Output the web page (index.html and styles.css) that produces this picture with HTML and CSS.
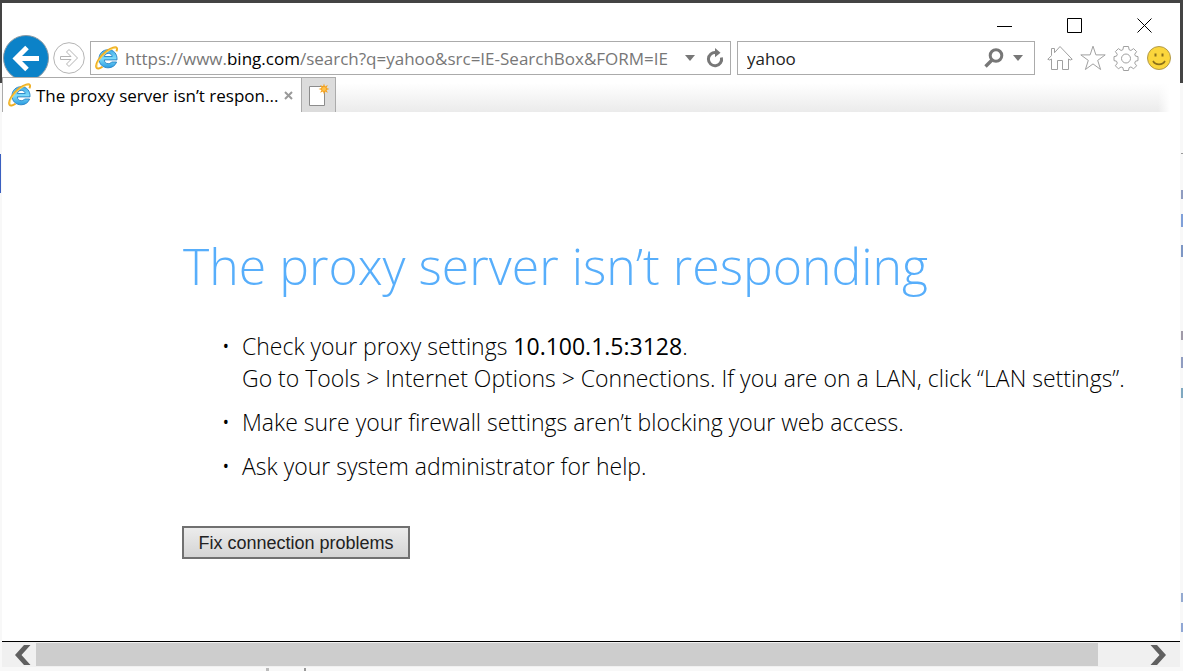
FILE: index.html
```html
<!DOCTYPE html>
<html lang="en">
<head>
  <meta charset="UTF-8" />
  <meta name="viewport" content="width=device-width, initial-scale=1.0"/>
  <title>The proxy server isn’t responding</title>
  <link rel="stylesheet" href="styles.css">
</head>
<body>
  <svg class="defs" aria-hidden="true">
    <defs>
      <linearGradient id="blue" x1="0" y1="0" x2="0" y2="1">
        <stop offset="0" stop-color="#3fa9e6"/>
        <stop offset=".5" stop-color="#7fdcfa"/>
        <stop offset="1" stop-color="#2a9be0"/>
      </linearGradient>
      <symbol id="ie" viewBox="0 0 24 24">
        <path d="M22 13.900H9.300c.2 2.400 1.700 3.800 3.900 3.800 1.500 0 2.700-.6 3.400-1.700h5c-1.300 3.700-4.500 5.800-8.500 5.800-5.300 0-9.100-3.700-9.100-9 0-5.400 3.900-9.100 9.200-9.100 5.500 0 9.200 4.100 8.800 10.200zM9.400 10.500h7.800c-.3-1.900-1.700-3.100-3.800-3.100-2.200 0-3.600 1.200-4 3.100z" fill="url(#blue)" fill-rule="evenodd" stroke="#2581c4" stroke-width=".9"/>
        <path d="M7.500 20.700C4.600 22.700 2.400 23 1.500 21.600-.2 18.700 4.300 10.700 11 5.600 16.300 1.600 20.900.3 21.800 2.100c.5.900.2 2-.4 3.300" fill="none" stroke="#efae22" stroke-width="2"/>
        <path d="M2.200 21.300C.9 18.400 5.300 11.100 11.400 6.400 16 2.900 20.200 1.300 21.300 2.500" fill="none" stroke="#ffdf6b" stroke-width=".9"/>
      </symbol>
    </defs>
  </svg>

  <div class="window">
    <div class="titlebar">
      <button class="caption" aria-label="Minimize">
        <svg width="16" height="16" viewBox="0 0 16 16"><path d="M0 8.500h15"/></svg>
      </button>
      <button class="caption" aria-label="Maximize">
        <svg width="16" height="16" viewBox="0 0 16 16"><path d="M.5.5h14v14H.5z"/></svg>
      </button>
      <button class="caption" aria-label="Close">
        <svg width="16" height="16" viewBox="0 0 16 16"><path d="M.5.5l14 14M14.500.5l-14 14"/></svg>
      </button>
    </div>

    <div class="navbar">
      <button class="back" aria-label="Back">
        <svg width="46" height="46" viewBox="0 0 46 46">
          <circle cx="23" cy="23" r="22.500" fill="#0b82c8" stroke="#8d9aa3"/>
          <path d="M24 12.500L13 23.500l11 11M13.500 23.500H36" fill="none" stroke="#fff" stroke-width="5"/>
        </svg>
      </button>
      <button class="forward" aria-label="Forward">
        <svg width="32" height="32" viewBox="0 0 32 32" fill="#fff" stroke="#b4b4b4">
          <circle cx="16" cy="16" r="15.300"/>
          <path d="M7.500 14.500h10.500l-4.500-4.500 2.500-2.500 8.500 8.500-8.500 8.500-2.500-2.500 4.500-4.500H7.500z"/>
        </svg>
      </button>

      <div class="box address">
        <svg class="ie" width="24" height="24"><use href="#ie"/></svg>
        <div class="url" role="textbox" contenteditable="true" spellcheck="false" aria-label="Address">https://www.<span class="domain">bing.com</span>/search?q=yahoo&amp;src=IE-SearchBox&amp;FORM=IE</div>
        <button class="arrow" aria-label="Show address list">
          <svg width="10" height="6" viewBox="0 0 10 6"><path d="M0 0h10L5 6z" fill="#777"/></svg>
        </button>
        <button class="refresh" aria-label="Refresh">
          <svg width="18" height="20" viewBox="0 0 18 20">
            <path d="M15.400 9.500A6.600 6.600 0 1 1 10 4.600" fill="none" stroke="#777" stroke-width="3"/>
            <path d="M9 0l5.500 4.700L9 9.300z" fill="#777"/>
          </svg>
        </button>
      </div>

      <form class="box search">
        <input type="text" value="yahoo" aria-label="Search">
        <button class="find" type="button" aria-label="Search the web">
          <svg width="20" height="20" viewBox="0 0 20 20" fill="none" stroke="#777">
            <circle cx="12" cy="7.500" r="5.800" stroke-width="3"/>
            <path d="M8 12L1.500 18.500" stroke-width="3.400"/>
          </svg>
        </button>
        <button class="arrow" type="button" aria-label="Search providers">
          <svg width="10" height="6" viewBox="0 0 10 6"><path d="M0 0h10L5 6z" fill="#777"/></svg>
        </button>
      </form>

      <div class="tools">
        <button aria-label="Home">
          <svg width="26" height="26" viewBox="0 0 26 26">
            <path d="M.8 14.300L4.500 10.600V3.500h3v4.200L13 1.500l12.200 12.800-2 .7-1.700-1v10.500h-6v-9h-5v9h-6V14l-1.700 1z"/>
          </svg>
        </button>
        <button aria-label="Favorites">
          <svg width="26" height="26" viewBox="0 0 26 26">
            <path d="M13 1.200l2.900 8.700h9.300l-7.500 5.500 2.900 9.100-7.600-5.600-7.600 5.600 2.900-9.100L.8 9.900h9.300z"/>
          </svg>
        </button>
        <button aria-label="Tools">
          <svg width="26" height="26" viewBox="0 0 26 26">
            <path d="M10.500 1.500h5l.6 3.200 1.800.8 2.700-1.900 3 3-1.900 2.700.8 1.800 2.500.5v4l-2.500.6-.8 1.900 1.900 2.700-3 3-2.700-1.900-1.800.8-.6 2.800h-5l-.6-2.800-1.800-.8-2.700 1.900-3-3 1.900-2.700-.8-1.900L1 15.600v-4l2.500-.5.8-1.800-1.900-2.700 3-3 2.700 1.900 1.800-.8z"/>
            <circle cx="13" cy="13.500" r="4.500"/>
          </svg>
        </button>
        <button aria-label="Send feedback">
          <svg width="26" height="26" viewBox="0 0 26 26">
            <circle cx="13" cy="13" r="11.500" fill="#fbd63c" stroke="#b19a4c"/>
            <path d="M9.500 8.500v3M16.500 8.500v3" stroke="#8a701c" stroke-width="2"/>
            <path d="M7 16c2.500 4.500 9.500 4.500 12 0" stroke="#8a701c" stroke-width="1.600"/>
          </svg>
        </button>
      </div>
    </div>

    <div class="tabs">
      <div class="tab">
        <svg class="ie" width="24" height="24"><use href="#ie"/></svg>
        <span class="tab-title">The proxy server isn’t respon...</span>
        <button class="close-tab" aria-label="Close tab">
          <svg width="9" height="9" viewBox="0 0 9 9"><path d="M1 1l7 7M8 1L1 8" stroke="#999" stroke-width="2"/></svg>
        </button>
      </div>
      <button class="new-tab" aria-label="New tab">
        <svg width="22" height="24" viewBox="0 0 22 24">
          <path d="M1.500 3.500h15v19h-15z" fill="#fff" stroke="#8c8c8c"/>
          <path d="M16 .5l1 3 2.800-1.400-1.300 2.800 3 1-3 1 1.300 2.800L17 8.400l-1 3-1-3-2.800 1.300 1.300-2.800-3-1 3-1-1.300-2.800L15 3.500z" fill="#f6a21c"/>
          <circle cx="16" cy="6" r="2" fill="#ffc14a"/>
        </svg>
      </button>
      <div class="tab-space"></div>
    </div>

    <main>
      <h1>The proxy server isn’t responding</h1>
      <ul>
        <li>Check your proxy settings <strong>10.100.1.5:3128</strong>.<br>Go to Tools &gt; Internet Options &gt; Connections. If you are on a LAN, click “LAN settings”.</li>
        <li>Make sure your firewall settings aren’t blocking your web access.</li>
        <li>Ask your system administrator for help.</li>
      </ul>
      <button class="fix">Fix connection problems</button>
    </main>

    <div class="scrollbar">
      <button aria-label="Scroll left">
        <svg width="16" height="20" viewBox="0 0 16 20"><path d="M9 0h6.500L6.500 10l9 10H9L0 10z" fill="#606060"/></svg>
      </button>
      <div class="track"><div class="thumb"></div></div>
      <button aria-label="Scroll right">
        <svg width="16" height="20" viewBox="0 0 16 20"><path d="M7 0H.5l9 10-9 10H7l9-10z" fill="#606060"/></svg>
      </button>
    </div>
  </div>
</body>
</html>
```
FILE: styles.css
```css
* {
  box-sizing: border-box;
}

/* whatever lies behind the window shows as a thin edge */
body {
  margin: 0;
  min-height: 100vh;
  display: flex;
  padding: 3px 3px 4px 2px;
  font-family: "Segoe UI", "Open Sans", sans-serif;
  color: #000;
  background:
    linear-gradient(#3a5fc0, #3a5fc0) 0 154px / 1px 39px no-repeat,
    linear-gradient(#999, #999) 100% 153px / 2px 1px no-repeat,
    linear-gradient(#8f9cc0, #8f9cc0) 100% 190px / 2px 9px no-repeat,
    linear-gradient(#7f9fd8, #7f9fd8) 100% 214px / 2px 13px no-repeat,
    linear-gradient(#7d96c4, #7d96c4) 100% 245px / 2px 12px no-repeat,
    linear-gradient(#a09aa8, #a09aa8) 100% 331px / 2px 9px no-repeat,
    linear-gradient(#8f9cc0, #8f9cc0) 100% 357px / 2px 11px no-repeat,
    linear-gradient(#7fa8c0, #7fa8c0) 100% 388px / 2px 10px no-repeat,
    linear-gradient(#93a9d0, #93a9d0) 100% 593px / 2px 9px no-repeat,
    linear-gradient(#8fa6d4, #8fa6d4) 100% 623px / 2px 9px no-repeat,
    linear-gradient(#bbb, #bbb) 266px 100% / 3px 3px no-repeat,
    linear-gradient(#999, #999) 304px 100% / 2px 3px no-repeat,
    linear-gradient(#444 83px, #f8f8f8 83px);
}

button {
  margin: 0;
  padding: 0;
  border: 0;
  background: none;
  display: flex;
  align-items: center;
  justify-content: center;
}

svg {
  display: block;
  flex: none;
}

.defs {
  position: absolute;
  width: 0;
  height: 0;
}

.window {
  flex: 1;
  min-width: 0;
  display: flex;
  flex-direction: column;
  background: #fff;
}

.titlebar {
  display: flex;
  justify-content: flex-end;
  height: 32px;
  padding: 14px 0 0;
}

.caption {
  width: 70px;
  height: 18px;
}

.caption svg {
  fill: none;
  stroke: #000;
}

.navbar {
  display: flex;
  align-items: center;
  height: 42px;
  padding: 4px 8px 0 1px;
}

.back {
  width: 46px;
  height: 46px;
}

.forward {
  margin: 0 5px 0 4px;
}

.box {
  display: flex;
  align-items: center;
  height: 34px;
  border: 1px solid #ababab;
  background: #fff;
}

.address {
  flex: 629;
  min-width: 0;
  margin-right: 6px;
  padding: 0 6px 0 4px;
}

.url {
  flex: 1;
  min-width: 0;
  margin: 0 10px 0 6px;
  padding-top: 2px;
  font-size: 17px;
  line-height: 24px;
  white-space: nowrap;
  overflow: hidden;
  color: #777;
}

.domain {
  color: #000;
}

.refresh {
  margin-left: 11px;
}

.search {
  flex: 276;
  min-width: 0;
  padding: 0 11px 0 9px;
}

.search input {
  flex: 1;
  min-width: 0;
  padding: 2px 0 0;
  border: 0;
  outline: 0;
  font: 17px/24px "Segoe UI", "Open Sans", sans-serif;
  color: #222;
}

.find {
  margin-right: 9px;
}

.tools {
  display: flex;
  gap: 7px;
  margin-left: 12px;
}

.tools svg {
  fill: none;
  stroke: #a0a0a0;
}

.tabs {
  display: flex;
  height: 35px;
  position: relative;
}

.tab {
  display: flex;
  align-items: center;
  width: 300px;
  padding: 0 8px 0 5px;
  border: 1px solid #ababab;
  border-bottom: 0;
  background: #fff;
}

.tab-title {
  flex: 1;
  margin-left: 4px;
  padding-top: 2px;
  font-size: 17px;
  line-height: 24px;
  white-space: nowrap;
}

.new-tab {
  width: 34px;
  border: 1px solid #ababab;
  border-left: 0;
  border-bottom: 0;
  background: #dcdcdc;
}

.tab-space {
  flex: 1;
  margin: 6px 10px 0 0;
  background: linear-gradient(to right, transparent calc(100% - 12px), #fff), linear-gradient(#fff, #ebebeb);
}

main {
  flex: 1;
  padding: 118px 40px 0 181px;
}

h1 {
  margin: 0;
  font-size: 50px;
  line-height: 72px;
  font-weight: 300;
  color: #57aefb;
}

ul {
  margin: 28px 0 0;
  padding: 0 0 0 59px;
  list-style-type: "•\00a0\00a0";
  font-size: 23px;
  line-height: 32px;
  font-weight: 300;
}

li {
  margin-bottom: 12px;
  white-space: nowrap;
}

strong {
  font-weight: 400;
}

.fix {
  width: 228px;
  height: 33px;
  margin: 44px 0 0 -1px;
  border: 2px solid #707070;
  background: linear-gradient(#ececec, #d4d4d4);
  font: 18px/24px "Liberation Sans", Arial, sans-serif;
  color: #222;
}

.scrollbar {
  display: flex;
  height: 26px;
  border-top: 1px solid #000;
  background: #f0f0f0;
}

.scrollbar button {
  width: 34px;
  padding-left: 8px;
}

.scrollbar button:last-child {
  padding: 0 10px 0 0;
}

.track {
  flex: 1;
  padding: 1px 0;
}

.thumb {
  width: 95.7%;
  height: 100%;
  background: #cdcdcd;
}
```
